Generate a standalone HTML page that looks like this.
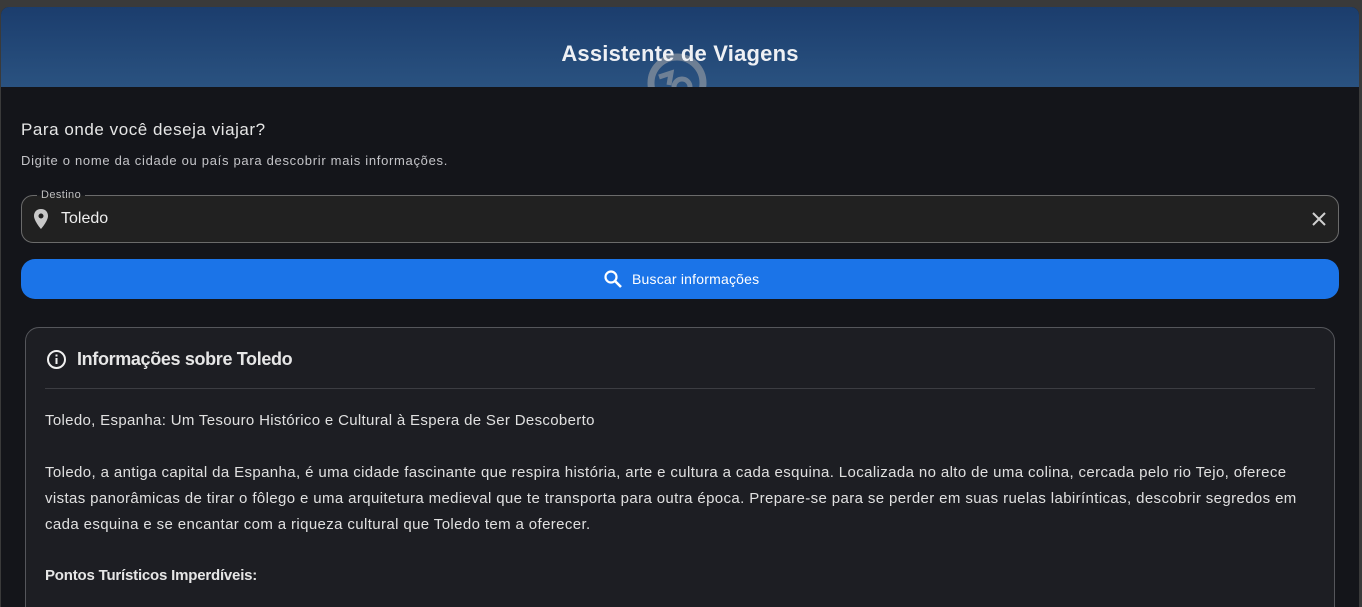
<!DOCTYPE html>
<html><head><meta charset="utf-8">
<style>
*{margin:0;padding:0;box-sizing:border-box}
html,body{width:1362px;height:601px;overflow:hidden;background:#3a3a3a;font-family:"Liberation Sans",sans-serif;}
.win{position:absolute;left:1px;top:7px;width:1358px;height:600px;background:#14151a;border-radius:8px 8px 0 0;overflow:hidden}
.hdr{position:absolute;left:0;top:0;width:100%;height:80px;background:linear-gradient(#1b3d6d,#2a5280);}
.hdr h1{position:absolute;left:0;right:0;top:33px;text-align:center;color:#eef0f4;font-size:22px;font-weight:bold;line-height:28px;letter-spacing:0.2px}
.t{position:absolute;white-space:nowrap}
</style></head><body>
<div class="win">
 <div class="hdr">
  <svg style="position:absolute;left:644px;top:44px" width="66" height="36" viewBox="0 0 66 36">
   <circle cx="32" cy="32" r="26" fill="none" stroke="rgba(170,170,170,0.55)" stroke-width="7"/>
   <circle cx="37" cy="36" r="8" fill="none" stroke="rgba(170,170,170,0.55)" stroke-width="5"/>
   <path d="M14 26 L26 22 L24 34" fill="none" stroke="rgba(170,170,170,0.55)" stroke-width="5"/>
  </svg>
  <h1>Assistente de Viagens</h1>
 </div>
 <div class="t" style="left:20px;top:113px;color:#e6e6e6;font-size:17px;letter-spacing:0.55px">Para onde você deseja viajar?</div>
 <div class="t" style="left:20px;top:146px;color:#c4c4c8;font-size:13px;letter-spacing:0.7px">Digite o nome da cidade ou país para descobrir mais informações.</div>
 <div style="position:absolute;left:20px;top:188px;width:1318px;height:48px;border:1px solid #6b6b6b;border-radius:12px;background:#212121"></div>
 <div class="t" style="left:36px;top:182px;padding:0 4px;color:#bfbfbf;font-size:11px;line-height:13px;letter-spacing:0.4px;background:linear-gradient(#14151a 50%,#212121 50%)">Destino</div>
 <svg style="position:absolute;left:32px;top:202px" width="16" height="20" viewBox="0 0 16 20"><path d="M8 0C3.6 0 1 3 1 7c0 5 7 13 7 13s7-8 7-13c0-4-2.6-7-7-7zm0 9.5a2.5 2.5 0 1 1 0-5 2.5 2.5 0 0 1 0 5z" fill="#c8c8c8"/></svg>
 <div class="t" style="left:60px;top:203px;color:#eee;font-size:16px">Toledo</div>
 <svg style="position:absolute;left:1311px;top:205px" width="14" height="14" viewBox="0 0 14 14"><path d="M1 1L13 13M13 1L1 13" stroke="#d0d0d0" stroke-width="2"/></svg>
 <div style="position:absolute;left:20px;top:252px;width:1318px;height:40px;border-radius:14px;background:#1b74e8"></div>
 <svg style="position:absolute;left:602px;top:262px" width="20" height="20" viewBox="0 0 20 20"><circle cx="8" cy="8" r="5.5" fill="none" stroke="#fff" stroke-width="2.2"/><path d="M12 12L18 18" stroke="#fff" stroke-width="2.6"/></svg>
 <div class="t" style="left:631px;top:264px;color:#fff;font-size:14px;letter-spacing:0.2px">Buscar informações</div>
 <div style="position:absolute;left:24px;top:320px;width:1310px;height:300px;border:1px solid #55565b;border-radius:14px;background:#1d1e23"></div>
 <svg style="position:absolute;left:45px;top:342px" width="21" height="21" viewBox="0 0 21 21"><circle cx="10.5" cy="10.5" r="8.5" fill="none" stroke="#f0f0f0" stroke-width="2"/><rect x="9.5" y="9" width="2" height="6" fill="#f0f0f0"/><rect x="9.5" y="5.5" width="2" height="2" fill="#f0f0f0"/></svg>
 <div class="t" style="left:76px;top:342px;color:#e6e6e6;font-size:18px;font-weight:bold;letter-spacing:-0.35px">Informações sobre Toledo</div>
 <div style="position:absolute;left:44px;top:381px;width:1270px;height:1px;background:#3c3d42"></div>
 <div class="t" style="left:44px;top:405px;color:#e0e0e0;font-size:15px;letter-spacing:0.33px">Toledo, Espanha: Um Tesouro Histórico e Cultural à Espera de Ser Descoberto</div>
 <div class="t" style="left:44px;top:453px;color:#e0e0e0;font-size:15px;line-height:26px;letter-spacing:0.38px">Toledo, a antiga capital da Espanha, é uma cidade fascinante que respira história, arte e cultura a cada esquina. Localizada no alto de uma colina, cercada pelo rio Tejo, oferece<br>vistas panorâmicas de tirar o fôlego e uma arquitetura medieval que te transporta para outra época. Prepare-se para se perder em suas ruelas labirínticas, descobrir segredos em<br>cada esquina e se encantar com a riqueza cultural que Toledo tem a oferecer.</div>
 <div class="t" style="left:44px;top:560px;color:#e6e6e6;font-size:15px;font-weight:bold;letter-spacing:-0.2px">Pontos Turísticos Imperdíveis:</div>
</div>
</body></html>
